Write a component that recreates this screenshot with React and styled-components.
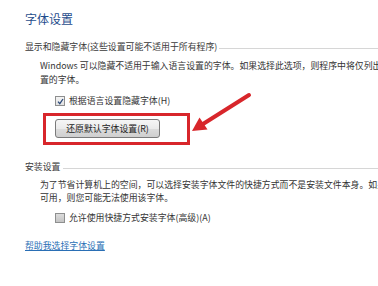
import React from 'react'
import styled, { createGlobalStyle } from 'styled-components'

const GlobalStyle = createGlobalStyle`
  html, body {
    margin: 0;
    padding: 0;
    background: #fff;
    overflow: hidden;
  }
  body {
    font-family: "Noto Sans CJK SC", "Noto Sans", sans-serif;
  }
`

const Page = styled.div`
  position: relative;
  width: 378px;
  height: 286px;
  padding: 10px 0 0 25px;
  box-sizing: border-box;
  overflow: hidden;
  color: #333;
  font-size: 8.9px;
`

const Title = styled.h1`
  margin: 0;
  font-size: 12px;
  line-height: 18px;
  font-weight: 400;
  color: #1f4d8c;
`

const SectionHeader = styled.div`
  display: flex;
  align-items: center;
  gap: 2px;
  margin-top: ${p => p.$top}px;
  line-height: 14px;
  color: #3a3a3a;
  white-space: nowrap;

  &::after {
    content: "";
    flex: 1;
    border-top: 1px solid #d6d6d6;
    margin-top: 2px;
  }
`

const Para = styled.div`
  margin: ${p => p.$top}px 0 0 15px;
  line-height: ${p => p.$lh || 14}px;
  white-space: nowrap;
`

const CheckRow = styled.label`
  display: flex;
  align-items: center;
  gap: 4px;
  margin: ${p => p.$top}px 0 0 30px;
  line-height: 14px;
  white-space: nowrap;
`

const Box = styled.span`
  width: 8px;
  height: 8px;
  border: 1px solid #8e8f8f;
  background: ${p => p.$checked
    ? 'linear-gradient(#f4f4f4, #e2e2e2)'
    : 'linear-gradient(#dcdcdc, #c4c4c4)'};
  display: flex;
  align-items: center;
  justify-content: center;
`

const Highlight = styled.div`
  display: inline-block;
  margin: 5px 0 0 18px;
  padding: 3px 27px 4px 9px;
  border: 3px solid #d8262b;
`

const Button = styled.button`
  display: block;
  width: 105px;
  height: 19px;
  padding: 0;
  border: 1px solid #7a7a7a;
  border-radius: 3px;
  background: linear-gradient(#f6f6f6 0%, #ebebeb 50%, #dcdcdc 51%, #cfcfcf 100%);
  font-family: inherit;
  font-size: 8.9px;
  color: #222;
  line-height: 17px;
`

const HelpLink = styled.a`
  display: inline-block;
  margin-top: 14px;
  line-height: 14px;
  color: #2a6fb5;
  text-decoration: underline;
`

const Arrow = styled.svg`
  position: absolute;
  left: 0;
  top: 0;
  pointer-events: none;
`

export default function App() {
  return (
    <Page>
      <GlobalStyle />
      <Title>字体设置</Title>

      <SectionHeader $top={12}>显示和隐藏字体(这些设置可能不适用于所有程序)</SectionHeader>
      <Para $top={5}>
        Windows 可以隐藏不适用于输入语言设置的字体。如果选择此选项，则程序中将仅列出适用于您的语言设
        <br />
        置的字体。
      </Para>
      <CheckRow $top={7}>
        <Box $checked>
          <svg width="7" height="7" viewBox="0 0 7 7">
            <path d="M1 3.6 L2.8 5.6 L6 1" fill="none" stroke="#2c4a7a" strokeWidth="1.3" />
          </svg>
        </Box>
        根据语言设置隐藏字体(H)
      </CheckRow>
      <Highlight>
        <Button>还原默认字体设置(R)</Button>
      </Highlight>

      <SectionHeader $top={15}>安装设置</SectionHeader>
      <Para $top={4} $lh={13}>
        为了节省计算机上的空间，可以选择安装字体文件的快捷方式而不是安装文件本身。如果字体文件的位置不
        <br />
        可用，则您可能无法使用该字体。
      </Para>
      <CheckRow $top={7}>
        <Box />
        允许使用快捷方式安装字体(高级)(A)
      </CheckRow>
      <div>
        <HelpLink>帮助我选择字体设置</HelpLink>
      </div>

      <Arrow width="378" height="286">
        <line x1="249" y1="95" x2="203" y2="124" stroke="#d8262b" strokeWidth="4" strokeLinecap="round" />
        <polygon points="192,131 199.5,117.6 207.5,129.5" fill="#d8262b" />
      </Arrow>
    </Page>
  )
}
